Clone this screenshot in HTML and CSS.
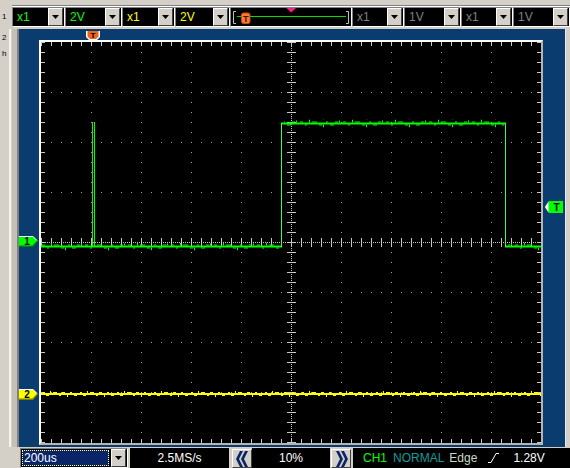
FILE: index.html
```html
<!DOCTYPE html>
<html lang="en">
<head>
    <meta charset="UTF-8">
    <title>DSO</title>
    <link rel="stylesheet" href="styles.css">
</head>
<body>
<div class="scope">
    <!--channel settings-->
    <div class="toolbar">
        <div class="row-label">1</div>
        <div class="bar">
            <div class="combo w53 ch1"><span class="val">x1</span><span class="drop"></span></div>
            <div class="combo w57 ch1"><span class="val">2V</span><span class="drop"></span></div>
            <div class="combo w53 ch2"><span class="val">x1</span><span class="drop"></span></div>
            <div class="combo w55 ch2"><span class="val">2V</span><span class="drop"></span></div>
            <div class="slider">
                <svg width="118" height="18" viewBox="0 0 118 18">
                    <path d="M4 3.5H1.5V15.5H4M114 3.5H116.5V15.5H114" stroke="#c0c0c0" fill="none"/>
                    <path d="M5 8.5H114" stroke="#00e000"/>
                    <polygon points="54.5,0 64,0 59.25,4.5" fill="#ff1e8c"/>
                    <rect x="9.5" y="5" width="8.5" height="10.5" rx="2" fill="#ff7a30" stroke="#c84a10"/>
                    <text class="thumb-t" x="13.75" y="13.5">T</text>
                </svg>
            </div>
            <div class="combo w52 off"><span class="val">x1</span><span class="drop"></span></div>
            <div class="combo w57 off"><span class="val">1V</span><span class="drop"></span></div>
            <div class="combo w52 off"><span class="val">x1</span><span class="drop"></span></div>
            <div class="combo w57 off"><span class="val">1V</span><span class="drop"></span></div>
        </div>
    </div>

    <div class="middle">
        <div class="side">
            <span>2</span>
            <span>h</span>
        </div>
        <!--scope screen-->
        <div class="panel">
            <div class="frame">
                <svg class="grid" width="500" height="401" viewBox="0 0 500 401">
                    <defs>
                        <pattern id="nz1" width="43" height="8" y="-4" patternUnits="userSpaceOnUse">
                            <g fill="#00ff00">
                                <rect x="1" y="2" width="3" height="1"/>
                                <rect x="6" y="5" width="2" height="1"/>
                                <rect x="10" y="0" width="1" height="3"/>
                                <rect x="13" y="2" width="5" height="1"/>
                                <rect x="20" y="5" width="3" height="1"/>
                                <rect x="24" y="5" width="1" height="3"/>
                                <rect x="27" y="2" width="2" height="1"/>
                                <rect x="31" y="5" width="4" height="1"/>
                                <rect x="36" y="2" width="3" height="1"/>
                                <rect x="40" y="1" width="1" height="2"/>
                            </g>
                        </pattern>
                        <pattern id="nz2" width="37" height="8" y="-4" patternUnits="userSpaceOnUse">
                            <g fill="#ffff00">
                                <rect x="2" y="2" width="2" height="1"/>
                                <rect x="5" y="5" width="3" height="1"/>
                                <rect x="9" y="1" width="1" height="2"/>
                                <rect x="12" y="2" width="4" height="1"/>
                                <rect x="18" y="5" width="2" height="1"/>
                                <rect x="21" y="2" width="3" height="1"/>
                                <rect x="26" y="5" width="1" height="2"/>
                                <rect x="29" y="2" width="2" height="1"/>
                                <rect x="33" y="5" width="3" height="1"/>
                            </g>
                        </pattern>
                    </defs>

                    <!-- division dots -->
                    <path d="M50.5 0V401M100.5 0V401M150.5 0V401M200.5 0V401M300.5 0V401M350.5 0V401M400.5 0V401M450.5 0V401M0 50.5H500M0 100.5H500M0 150.5H500M0 250.5H500M0 300.5H500M0 350.5H500" stroke="#a8a8a8" stroke-dasharray="1 9"/>
                    <!-- center axes -->
                    <path d="M250.5 0V401M0 200.5H500" stroke="#c8c8c8" stroke-dasharray="1 1"/>
                    <path d="M250.5 0V401" stroke="#c8c8c8" stroke-width="9" stroke-dasharray="1 9"/>
                    <path d="M0 200.5H500" stroke="#c8c8c8" stroke-width="9" stroke-dasharray="1 9"/>
                    <!-- edge ticks -->
                    <path d="M2 0V401M498 0V401" stroke="#c8c8c8" stroke-width="4" stroke-dasharray="1 9"/>
                    <path d="M0 2H500M0 399H500" stroke="#c8c8c8" stroke-width="4" stroke-dasharray="1 9"/>

                    <!-- CH2 -->
                    <g transform="translate(0 352)">
                        <path d="M0 0H500" stroke="#ffff00" stroke-width="2"/>
                        <rect x="0" y="-4" width="500" height="8" fill="url(#nz2)"/>
                    </g>

                    <!-- CH1 -->
                    <g fill="none" stroke="#00ff00">
                        <path d="M0 204.5H241M464 204.5H500M240 81.5H465" stroke-width="2"/>
                        <path d="M240.5 205V81M464.5 81V205" stroke="#40ff40" stroke-width="1"/>
                        <path d="M51.5 204V80M53.5 204V80" stroke-width="1"/>
                    </g>
                    <g transform="translate(0 204.5)">
                        <rect x="0" y="-4" width="239" height="8" fill="url(#nz1)"/>
                        <rect x="467" y="-4" width="33" height="8" fill="url(#nz1)"/>
                    </g>
                    <g transform="translate(0 81.5)">
                        <rect x="243" y="-4" width="220" height="8" fill="url(#nz1)"/>
                    </g>
                </svg>
            </div>

            <!--markers-->
            <svg class="mk mk-trigpos" width="14" height="9" viewBox="0 0 14 9">
                <polygon points="0,0 14,0 14,6 11,9 3,9 0,6" fill="#ffffff"/>
                <polygon points="1.5,0 12.5,0 12.5,5.5 10,8 4,8 1.5,5.5" fill="#f0641a"/>
                <text x="7" y="7.2">T</text>
            </svg>
            <svg class="mk mk-ch1" width="19" height="11" viewBox="0 0 19 11">
                <polygon points="0,0 14,0 19,5.5 14,11 0,11" fill="#008000"/>
                <polygon points="0,0 14,0 18,4.5 13.5,9.5 0,9.5" fill="#00ff00"/>
                <path d="M0 0.5H14L18 4.5" stroke="#ffffff" fill="none"/>
                <text x="8" y="9">1</text>
            </svg>
            <svg class="mk mk-ch2" width="19" height="11" viewBox="0 0 19 11">
                <polygon points="0,0 14,0 19,5.5 14,11 0,11" fill="#808000"/>
                <polygon points="0,0 14,0 18,4.5 13.5,9.5 0,9.5" fill="#ffff00"/>
                <path d="M0 0.5H14L18 4.5" stroke="#ffffff" fill="none"/>
                <text x="8" y="9">2</text>
            </svg>
            <svg class="mk mk-level" width="18" height="12" viewBox="0 0 18 12">
                <polygon points="0,6 4,0 18,0 18,12 4,12" fill="#00ff00"/>
                <polygon points="0,6 3.5,0.5 3.5,11.5" fill="#ffffff"/>
                <text x="11.5" y="10">T</text>
            </svg>
        </div>
        <div class="side-r"></div>
    </div>

    <!--time base / trigger-->
    <div class="status">
        <div class="combo sel"><span class="val">200us</span><span class="drop"></span></div>
        <div class="readout rate">2.5MS/s</div>
        <div class="step">
            <svg width="13" height="16" viewBox="0 0 13 16">
                <polygon points="4,0 0,8 4,16 7,16 3,8 7,0" fill="#0a246a"/>
                <polygon points="9,0 5,8 9,16 12,16 8,8 12,0" fill="#0a246a"/>
            </svg>
        </div>
        <div class="readout pos">10%</div>
        <div class="step next">
            <svg width="13" height="16" viewBox="0 0 13 16">
                <polygon points="9,0 13,8 9,16 6,16 10,8 6,0" fill="#0a246a"/>
                <polygon points="4,0 8,8 4,16 1,16 5,8 1,0" fill="#0a246a"/>
            </svg>
        </div>
        <div class="trig">
            <span class="t-ch">CH1</span>
            <span class="t-mode">NORMAL</span>
            <span class="t-type">Edge</span>
            <svg class="t-edge" width="11" height="10" viewBox="0 0 11 10">
                <path d="M0 9.5H3L8 0.5H11" stroke="#ffffff" fill="none"/>
            </svg>
            <span class="t-lvl">1.28V</span>
        </div>
    </div>
</div>
</body>
</html>
```

FILE: styles.css
```css
*{
    margin: 0;
    padding: 0;
    box-sizing: border-box;
}

body{
    width: 570px;
    height: 468px;
    overflow: hidden;
    background: #d4d0c8;
    font-family: "Liberation Sans", Arial, sans-serif;
    font-size: 12px;
}
.scope{
    display: flex;
    flex-direction: column;
    height: 468px;
}

/* top toolbar */
.toolbar{
    display: flex;
    height: 29px;
}
.row-label{
    width: 12px;
    padding: 12px 0 0 2px;
    font-size: 8px;
    line-height: 10px;
}
.bar{
    flex: 1;
    display: flex;
    height: 23px;
    margin-top: 5px;
    padding-top: 1px;
    border-top: 1px solid #808080;
    box-shadow: inset 0 1px #fff;
}

.combo{
    display: flex;
    height: 20px;
    background: #000;
    border: 1px solid;
    border-color: #808080 #fff #fff #808080;
}
.w52{ width: 52px; }
.w53{ width: 53px; }
.w55{ width: 55px; }
.w57{ width: 57px; }
.combo .val{
    flex: 1;
    padding-left: 4px;
    line-height: 18px;
}
.combo .drop{
    width: 15px;
    height: 18px;
    margin-right: 1px;
    background: #d4d0c8;
    border: 1px solid;
    border-color: #fff #404040 #404040 #fff;
    display: flex;
    align-items: center;
    justify-content: center;
}
.combo .drop::after{
    content: "";
    width: 7px;
    height: 4px;
    background: #000;
    clip-path: polygon(0 0, 100% 0, 50% 100%);
}
.ch1 .val{ color: #00ff00; }
.ch2 .val{ color: #ffff00; }
.off .val{ color: #808080; }

.slider{
    width: 122px;
    height: 20px;
    padding: 0 1px;
    background: #000;
    border: 1px solid;
    border-color: #808080 #fff #fff #808080;
}
.slider svg{
    display: block;
}
.thumb-t{
    font: bold 9px "Liberation Sans", Arial, sans-serif;
    fill: #401000;
    text-anchor: middle;
}

/* screen area */
.middle{
    display: flex;
    height: 419px;
    padding-bottom: 1px;
}
.side{
    width: 19px;
    display: flex;
    flex-direction: column;
    padding: 1px 0 0 2px;
    font-size: 8px;
    line-height: 16px;
    background: linear-gradient(90deg, #d4d0c8 9px, #f4f4f0 9px, #f4f4f0 11px, #d4d0c8 11px, #d4d0c8 12px, #c4c0b8 12px, #c4c0b8 17px, #808080 17px);
}
.panel{
    position: relative;
    width: 546px;
    background: #0b3c6f;
    padding: 11px 0 0 20px;
}
.frame{
    width: 504px;
    height: 405px;
    background: #000;
    border: 2px solid;
    border-color: #fff #b4b4b4 #b4b4b4 #fff;
}
.grid{
    display: block;
}
.side-r{
    flex: 1;
    border-left: 1px solid #e8e8e8;
}

.mk{
    position: absolute;
}
.mk text{
    font: bold 10px "Liberation Sans", Arial, sans-serif;
    fill: #000;
    text-anchor: middle;
}
.mk-trigpos{
    left: 67px;
    top: 2px;
}
.mk-trigpos text{
    font-size: 8px;
}
.mk-ch1{
    left: 0;
    top: 207px;
}
.mk-ch2{
    left: 0;
    top: 360px;
}
.mk-level{
    left: 526px;
    top: 172px;
}

/* bottom bar */
.status{
    display: flex;
    height: 20px;
    padding-left: 20px;
    font-size: 11px;
}
.status .combo{
    width: 108px;
}
.status .combo .val{
    margin: 1px 2px 1px 1px;
    padding-left: 1px;
    line-height: 14px;
    font-size: 12px;
    color: #fff;
    background: #0a246a;
    border: 1px dotted #ffff80;
}
.readout{
    background: #000;
    color: #fff;
    text-align: center;
    line-height: 20px;
    font-size: 12px;
}
.rate{
    width: 99px;
    margin-left: 2px;
}
.pos{
    width: 78px;
}
.step{
    width: 20px;
    height: 19px;
    margin: 1px 0 0 3px;
    background: #d4d0c8;
    border: 1px solid;
    border-color: #fff #404040 #404040 #fff;
    display: flex;
    align-items: center;
    justify-content: center;
}
.step.next{
    margin-left: 1px;
}
.trig{
    flex: 1;
    margin-left: 2px;
    display: flex;
    align-items: center;
    padding-left: 10px;
    background: #000;
    font-size: 12px;
}
.t-ch{
    color: #00ff00;
}
.t-mode{
    margin-left: 6px;
    color: #109c9c;
}
.t-type{
    margin-left: 5px;
    color: #c4dcc4;
}
.t-edge{
    margin-left: 11px;
}
.t-lvl{
    margin-left: 14px;
    color: #fff;
}
```
